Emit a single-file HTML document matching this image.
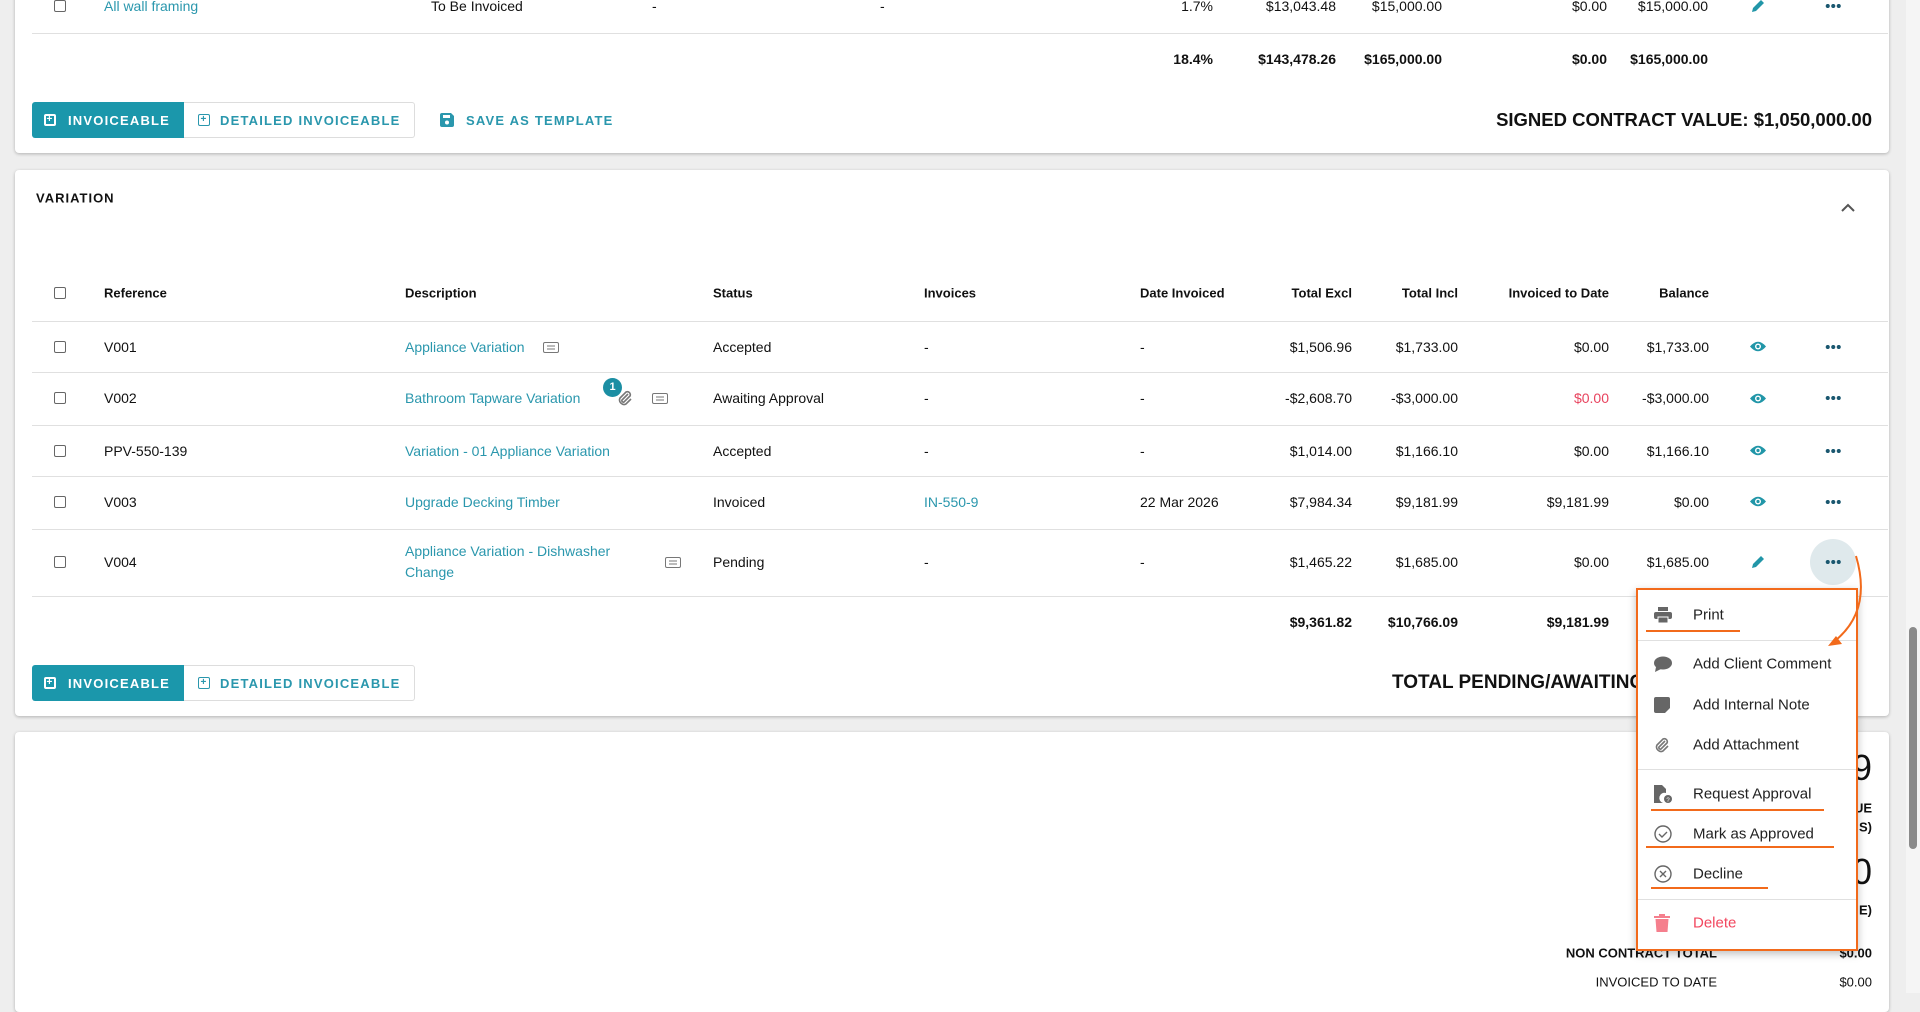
<!DOCTYPE html>
<html><head><meta charset="utf-8"><style>
*{margin:0;padding:0;box-sizing:border-box}
body{width:1920px;height:993px;overflow:hidden;background:#eeeeee;font-family:"Liberation Sans",sans-serif;font-size:14px;color:#111;position:relative}
.card{position:absolute;left:15px;width:1874px;background:#fff;border-radius:4px;box-shadow:0 1px 3px rgba(0,0,0,.25)}
.t{position:absolute;transform:translateY(-50%);white-space:nowrap}
.r{position:absolute;transform:translateY(-50%);white-space:nowrap;text-align:right}
.lk{color:#2a97ad}
.b{font-weight:bold}
.hl{position:absolute;left:32px;right:32px;height:1px;background:#e0e0e0}
.cb{position:absolute;width:12px;height:12px;border:1.5px solid #666;border-radius:2px;transform:translateY(-50%)}
.dots{position:absolute;transform:translate(-50%,-50%);width:16px;height:4px;background:radial-gradient(circle,#1b5870 1.9px,transparent 2.2px) 0 0/5.5px 4px repeat-x}
.btn{position:absolute;height:36px;display:flex;align-items:center;font-size:13px;font-weight:bold;letter-spacing:1.2px}
.menu{position:absolute;left:1636px;top:588px;width:222px;height:363px;background:#fff;border:2px solid #f26a1b;box-shadow:0 3px 8px rgba(0,0,0,.25)}
.mi{position:absolute;left:55px;transform:translateY(-50%);font-size:15px;color:#222;white-space:nowrap}
.ic{position:absolute;left:16px;transform:translateY(-50%)}
.sep{position:absolute;left:0;right:0;height:1px;background:#e0e0e0}
.ul{position:absolute;height:2px;background:#f26a1b}
</style></head><body>

<div class="card" style="top:-10px;height:163px"></div>
<div class="cb" style="left:54px;top:6px"></div>
<div class="t lk" style="left:104px;top:6px">All wall framing</div>
<div class="t" style="left:431px;top:6px">To Be Invoiced</div>
<div class="t" style="left:652px;top:6px">-</div>
<div class="t" style="left:880px;top:6px">-</div>
<div class="r" style="right:707px;top:6px">1.7%</div>
<div class="r" style="right:584px;top:6px">$13,043.48</div>
<div class="r" style="right:478px;top:6px">$15,000.00</div>
<div class="r" style="right:313px;top:6px">$0.00</div>
<div class="r" style="right:212px;top:6px">$15,000.00</div>
<svg style="position:absolute;left:1750px;top:-2px" width="16" height="16" viewBox="0 0 16 16"><path d="M2 14l1-4 8-8 3 3-8 8z" fill="#2196a8"/></svg>
<div class="dots" style="left:1833px;top:6px"></div>
<div class="hl" style="top:33px;left:32px;right:32px"></div>
<div class="r b" style="right:707px;top:59px">18.4%</div>
<div class="r b" style="right:584px;top:59px">$143,478.26</div>
<div class="r b" style="right:478px;top:59px">$165,000.00</div>
<div class="r b" style="right:313px;top:59px">$0.00</div>
<div class="r b" style="right:212px;top:59px">$165,000.00</div>

<div class="btn" style="left:32px;top:102px;width:152px;background:#1b97ab;color:#fff;border-radius:3px 0 0 3px;padding-left:12px"><span style="display:inline-block;width:12px;height:12px;border:2px solid #fff;border-radius:2px;margin-right:12px;font-size:10px;line-height:8px;text-align:center">+</span>INVOICEABLE</div>
<div class="btn" style="left:184px;top:102px;width:231px;border:1px solid #ddd;border-left:none;color:#2a97ad;border-radius:0 3px 3px 0;padding-left:14px"><span style="display:inline-block;width:12px;height:12px;border:1.5px solid #2a97ad;border-radius:2px;margin-right:10px;font-size:10px;line-height:9px;text-align:center">+</span>DETAILED INVOICEABLE</div>
<div class="btn" style="left:440px;top:102px;color:#2a97ad"><svg width="14" height="14" viewBox="0 0 14 14" style="margin-right:12px"><path d="M0 2a2 2 0 0 1 2-2h9l3 3v9a2 2 0 0 1-2 2H2a2 2 0 0 1-2-2z" fill="#2a97ad"/><rect x="3" y="2" width="7" height="3" fill="#fff"/><circle cx="7" cy="9.5" r="2" fill="#fff"/></svg>SAVE AS TEMPLATE</div>
<div class="r b" style="right:48px;top:120px;font-size:18.5px">SIGNED CONTRACT VALUE: $1,050,000.00</div>

<div class="card" style="top:170px;height:546px"></div>
<div class="t b" style="left:36px;top:198px;font-size:13px;letter-spacing:1px">VARIATION</div>
<svg style="position:absolute;left:1841px;top:203px" width="14" height="9"><path d="M1 8l6-6 6 6" stroke="#555" stroke-width="2" fill="none"/></svg>

<div class="cb" style="left:54px;top:293px"></div>
<div class="t b" style="left:104px;top:293px;font-size:13px">Reference</div>
<div class="t b" style="left:405px;top:293px;font-size:13px">Description</div>
<div class="t b" style="left:713px;top:293px;font-size:13px">Status</div>
<div class="t b" style="left:924px;top:293px;font-size:13px">Invoices</div>
<div class="t b" style="left:1140px;top:293px;font-size:13px">Date Invoiced</div>
<div class="r b" style="right:568px;top:293px;font-size:13px">Total Excl</div>
<div class="r b" style="right:462px;top:293px;font-size:13px">Total Incl</div>
<div class="r b" style="right:311px;top:293px;font-size:13px">Invoiced to Date</div>
<div class="r b" style="right:211px;top:293px;font-size:13px">Balance</div>
<div class="hl" style="top:321px"></div>

<div class="cb" style="left:54px;top:347px"></div>
<div class="t" style="left:104px;top:347px">V001</div>
<div class="t lk" style="left:405px;top:347px">Appliance Variation</div>
<svg style="position:absolute;left:543px;top:342px" width="16" height="11"><rect x=".5" y=".5" width="15" height="10" rx="1.5" fill="none" stroke="#777"/><path d="M4 4h8M4 7h8" stroke="#777"/></svg>
<div class="t" style="left:713px;top:347px">Accepted</div>
<div class="t" style="left:924px;top:347px">-</div>
<div class="t" style="left:1140px;top:347px">-</div>
<div class="r" style="right:568px;top:347px">$1,506.96</div>
<div class="r" style="right:462px;top:347px">$1,733.00</div>
<div class="r" style="right:311px;top:347px">$0.00</div>
<div class="r" style="right:211px;top:347px">$1,733.00</div>
<div class="hl" style="top:372px"></div>

<div class="cb" style="left:54px;top:398px"></div>
<div class="t" style="left:104px;top:398px">V002</div>
<div class="t lk" style="left:405px;top:398px">Bathroom Tapware Variation</div>
<div style="position:absolute;left:603px;top:378px;width:19px;height:19px;border-radius:50%;background:#1b8ea3;color:#fff;font-size:11px;font-weight:bold;text-align:center;line-height:19px">1</div>
<svg style="position:absolute;left:617px;top:390px" width="16" height="16" viewBox="0 0 16 16"><path d="M11 4l-6 6a1.5 1.5 0 0 0 2 2l6-6a3 3 0 0 0-4-4l-6 6a4.5 4.5 0 0 0 6 6l5-5" stroke="#777" stroke-width="1.6" fill="none"/></svg>
<svg style="position:absolute;left:652px;top:393px" width="16" height="11"><rect x=".5" y=".5" width="15" height="10" rx="1.5" fill="none" stroke="#777"/><path d="M4 4h8M4 7h8" stroke="#777"/></svg>
<div class="t" style="left:713px;top:398px">Awaiting Approval</div>
<div class="t" style="left:924px;top:398px">-</div>
<div class="t" style="left:1140px;top:398px">-</div>
<div class="r" style="right:568px;top:398px">-$2,608.70</div>
<div class="r" style="right:462px;top:398px">-$3,000.00</div>
<div class="r" style="right:311px;top:398px;color:#e8435e">$0.00</div>
<div class="r" style="right:211px;top:398px">-$3,000.00</div>
<div class="hl" style="top:425px"></div>

<div class="cb" style="left:54px;top:451px"></div>
<div class="t" style="left:104px;top:451px">PPV-550-139</div>
<div class="t lk" style="left:405px;top:451px">Variation - 01 Appliance Variation</div>
<div class="t" style="left:713px;top:451px">Accepted</div>
<div class="t" style="left:924px;top:451px">-</div>
<div class="t" style="left:1140px;top:451px">-</div>
<div class="r" style="right:568px;top:451px">$1,014.00</div>
<div class="r" style="right:462px;top:451px">$1,166.10</div>
<div class="r" style="right:311px;top:451px">$0.00</div>
<div class="r" style="right:211px;top:451px">$1,166.10</div>
<div class="hl" style="top:476px"></div>

<div class="cb" style="left:54px;top:502px"></div>
<div class="t" style="left:104px;top:502px">V003</div>
<div class="t lk" style="left:405px;top:502px">Upgrade Decking Timber</div>
<div class="t" style="left:713px;top:502px">Invoiced</div>
<div class="t lk" style="left:924px;top:502px">IN-550-9</div>
<div class="t" style="left:1140px;top:502px">22 Mar 2026</div>
<div class="r" style="right:568px;top:502px">$7,984.34</div>
<div class="r" style="right:462px;top:502px">$9,181.99</div>
<div class="r" style="right:311px;top:502px">$9,181.99</div>
<div class="r" style="right:211px;top:502px">$0.00</div>
<div class="hl" style="top:529px"></div>

<div class="cb" style="left:54px;top:562px"></div>
<div class="t" style="left:104px;top:562px">V004</div>
<div class="t lk" style="left:405px;top:562px;line-height:21px">Appliance Variation - Dishwasher<br>Change</div>
<svg style="position:absolute;left:665px;top:557px" width="16" height="11"><rect x=".5" y=".5" width="15" height="10" rx="1.5" fill="none" stroke="#777"/><path d="M4 4h8M4 7h8" stroke="#777"/></svg>
<div class="t" style="left:713px;top:562px">Pending</div>
<div class="t" style="left:924px;top:562px">-</div>
<div class="t" style="left:1140px;top:562px">-</div>
<div class="r" style="right:568px;top:562px">$1,465.22</div>
<div class="r" style="right:462px;top:562px">$1,685.00</div>
<div class="r" style="right:311px;top:562px">$0.00</div>
<div class="r" style="right:211px;top:562px">$1,685.00</div>
<div class="hl" style="top:596px"></div>

<svg style="position:absolute;left:1749px;top:340px" width="18" height="13" viewBox="0 0 18 13"><path d="M1 6.5Q9-3 17 6.5Q9 16 1 6.5z" fill="#2196a8"/><circle cx="9" cy="6.5" r="3" fill="#fff"/><circle cx="9" cy="6.5" r="1.6" fill="#2196a8"/></svg>
<svg style="position:absolute;left:1749px;top:392px" width="18" height="13" viewBox="0 0 18 13"><path d="M1 6.5Q9-3 17 6.5Q9 16 1 6.5z" fill="#2196a8"/><circle cx="9" cy="6.5" r="3" fill="#fff"/><circle cx="9" cy="6.5" r="1.6" fill="#2196a8"/></svg>
<svg style="position:absolute;left:1749px;top:444px" width="18" height="13" viewBox="0 0 18 13"><path d="M1 6.5Q9-3 17 6.5Q9 16 1 6.5z" fill="#2196a8"/><circle cx="9" cy="6.5" r="3" fill="#fff"/><circle cx="9" cy="6.5" r="1.6" fill="#2196a8"/></svg>
<svg style="position:absolute;left:1749px;top:495px" width="18" height="13" viewBox="0 0 18 13"><path d="M1 6.5Q9-3 17 6.5Q9 16 1 6.5z" fill="#2196a8"/><circle cx="9" cy="6.5" r="3" fill="#fff"/><circle cx="9" cy="6.5" r="1.6" fill="#2196a8"/></svg>
<svg style="position:absolute;left:1750px;top:554px" width="16" height="16" viewBox="0 0 16 16"><path d="M2 14l1-4 8-8 3 3-8 8z" fill="#2196a8"/></svg>
<div class="dots" style="left:1833px;top:347px"></div>
<div class="dots" style="left:1833px;top:398px"></div>
<div class="dots" style="left:1833px;top:451px"></div>
<div class="dots" style="left:1833px;top:502px"></div>
<div style="position:absolute;left:1810px;top:539px;width:46px;height:46px;border-radius:50%;background:#dfe9ec"></div>
<div class="dots" style="left:1833px;top:562px"></div>

<div class="r b" style="right:568px;top:622px">$9,361.82</div>
<div class="r b" style="right:462px;top:622px">$10,766.09</div>
<div class="r b" style="right:311px;top:622px">$9,181.99</div>

<div class="btn" style="left:32px;top:665px;width:152px;background:#1b97ab;color:#fff;border-radius:3px 0 0 3px;padding-left:12px"><span style="display:inline-block;width:12px;height:12px;border:2px solid #fff;border-radius:2px;margin-right:12px;font-size:10px;line-height:8px;text-align:center">+</span>INVOICEABLE</div>
<div class="btn" style="left:184px;top:665px;width:231px;border:1px solid #ddd;border-left:none;color:#2a97ad;border-radius:0 3px 3px 0;padding-left:14px"><span style="display:inline-block;width:12px;height:12px;border:1.5px solid #2a97ad;border-radius:2px;margin-right:10px;font-size:10px;line-height:9px;text-align:center">+</span>DETAILED INVOICEABLE</div>
<div class="t b" style="left:1392px;top:683px;font-size:19px">TOTAL PENDING/AWAITING APPROVAL: $0.00</div>

<div class="card" style="top:732px;height:280px"></div>
<div class="r" style="right:48px;top:768px;font-size:36px">9</div>
<div class="r b" style="right:48px;top:808px;font-size:13px">UE</div>
<div class="r b" style="right:48px;top:827px;font-size:13px">S)</div>
<div class="r" style="right:48px;top:872px;font-size:36px">0</div>
<div class="r b" style="right:48px;top:910px;font-size:13px">E)</div>
<div class="r b" style="right:203px;top:953px;font-size:13px">NON CONTRACT TOTAL</div>
<div class="r b" style="right:48px;top:953px;font-size:13px">$0.00</div>
<div class="r" style="right:203px;top:982px;font-size:13px">INVOICED TO DATE</div>
<div class="r" style="right:48px;top:982px;font-size:13px">$0.00</div>

<div style="position:absolute;left:1906px;top:0;width:14px;height:993px;background:#f5f5f5"></div>
<div style="position:absolute;left:1909px;top:627px;width:8px;height:222px;background:#8a8a8a;border-radius:4px"></div>

<div class="menu">
 <svg class="ic" style="top:25px" width="18" height="16" viewBox="0 0 18 16"><rect x="4" y="0" width="10" height="4" fill="#666"/><rect x="0" y="5" width="18" height="7" rx="2" fill="#666"/><rect x="4" y="10" width="10" height="6" fill="#666" stroke="#fff"/></svg>
 <div class="mi" style="top:25px">Print</div>
 <div class="sep" style="top:50px"></div>
 <svg class="ic" style="top:74px" width="18" height="16" viewBox="0 0 18 16"><ellipse cx="9" cy="7" rx="9" ry="6.5" fill="#666"/><path d="M2 11l-1 5 6-3z" fill="#666"/></svg>
 <div class="mi" style="top:74px">Add Client Comment</div>
 <svg class="ic" style="top:115px" width="16" height="16" viewBox="0 0 16 16"><path d="M2 0h12a2 2 0 0 1 2 2v9l-5 5H2a2 2 0 0 1-2-2V2a2 2 0 0 1 2-2z" fill="#666"/></svg>
 <div class="mi" style="top:115px">Add Internal Note</div>
 <svg class="ic" style="top:155px" width="16" height="16" viewBox="0 0 16 16"><path d="M11 4l-6 6a1.5 1.5 0 0 0 2 2l6-6a3 3 0 0 0-4-4l-6 6a4.5 4.5 0 0 0 6 6l5-5" stroke="#777" stroke-width="1.6" fill="none"/></svg>
 <div class="mi" style="top:155px">Add Attachment</div>
 <div class="sep" style="top:179px"></div>
 <svg class="ic" style="top:204px" width="18" height="18" viewBox="0 0 18 18"><path d="M0 0h8l4 4v4a5 5 0 0 0-3 10H0z" fill="#666"/><circle cx="14" cy="14" r="4" fill="#666"/><text x="14" y="17" font-size="6" fill="#fff" text-anchor="middle">?</text></svg>
 <div class="mi" style="top:204px">Request Approval</div>
 <svg class="ic" style="top:244px" width="18" height="18" viewBox="0 0 18 18"><circle cx="9" cy="9" r="8" stroke="#666" stroke-width="1.4" fill="none"/><path d="M5 9l3 3 5-5" stroke="#666" stroke-width="1.4" fill="none"/></svg>
 <div class="mi" style="top:244px">Mark as Approved</div>
 <svg class="ic" style="top:284px" width="18" height="18" viewBox="0 0 18 18"><circle cx="9" cy="9" r="8" stroke="#666" stroke-width="1.4" fill="none"/><path d="M6 6l6 6M12 6l-6 6" stroke="#666" stroke-width="1.4"/></svg>
 <div class="mi" style="top:284px">Decline</div>
 <div class="sep" style="top:309px"></div>
 <svg class="ic" style="top:333px" width="16" height="18" viewBox="0 0 16 18"><rect x="0" y="2" width="16" height="2" fill="#f57f8d"/><rect x="5" y="0" width="6" height="3" fill="#f57f8d"/><path d="M1.5 5h13l-1 13h-11z" fill="#f57f8d"/></svg>
 <div class="mi" style="top:333px;color:#f2475f">Delete</div>
</div>
<div class="ul" style="left:1646px;top:630px;width:94px"></div>
<div class="ul" style="left:1651px;top:809px;width:173px"></div>
<div class="ul" style="left:1646px;top:846px;width:188px"></div>
<div class="ul" style="left:1651px;top:887px;width:117px"></div>
<svg style="position:absolute;left:1820px;top:550px" width="50" height="100"><path d="M36 6Q52 60 16 90" stroke="#f26a1b" stroke-width="2" fill="none"/><path d="M8 96l14-2-6-8z" fill="#f26a1b"/></svg>
</body></html>
